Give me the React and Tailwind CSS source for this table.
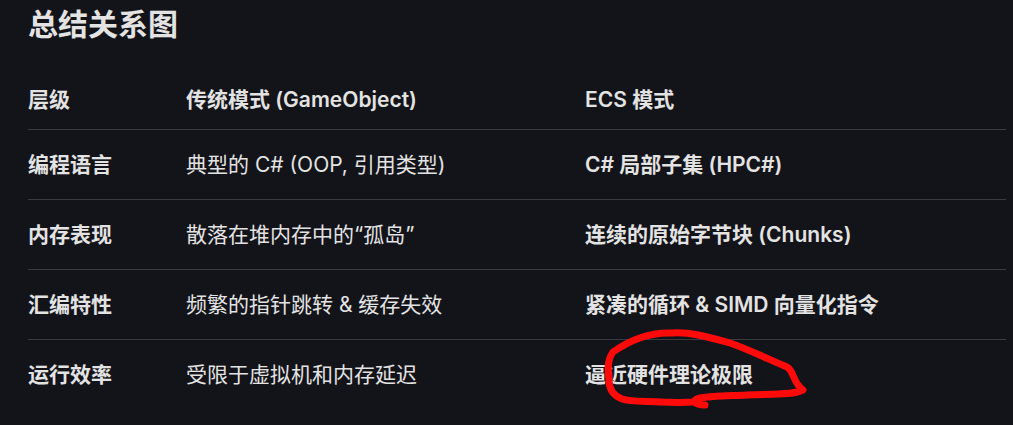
const rows = [
  ["编程语言", "典型的 C# (OOP, 引用类型)", "C# 局部子集 (HPC#)"],
  ["内存表现", "散落在堆内存中的“孤岛”", "连续的原始字节块 (Chunks)"],
  ["汇编特性", "频繁的指针跳转 & 缓存失效", "紧凑的循环 & SIMD 向量化指令"],
  ["运行效率", "受限于虚拟机和内存延迟", "逼近硬件理论极限"],
];

export default function App() {
  return (
    <div
      className="relative w-[1013px] h-[425px] overflow-hidden bg-[#131419] text-[#e3e3e3]"
      style={{ fontFamily: 'Inter, "Noto Sans CJK SC", sans-serif' }}
    >
      {/* TITLE */}
      <div className="h-[70px] pl-[28px] pt-[4px]">
        <h2 className="text-[30px] leading-[40px] font-bold">总结关系图</h2>
      </div>

      {/* TABLE */}
      <div className="ml-[28px] w-[978px]">
        <div className="grid grid-cols-[158px_399px_421px] h-[60px] items-center border-b border-[#3a3b40] text-[21px] font-semibold">
          <div>层级</div>
          <div>传统模式 (GameObject)</div>
          <div>ECS 模式</div>
        </div>

        {rows.map((r, i) => (
          <div
            key={i}
            className={`grid grid-cols-[158px_399px_421px] h-[70px] items-center text-[21px] ${
              i < rows.length - 1 ? "border-b border-[#3a3b40]" : ""
            }`}
          >
            <div className="font-semibold">{r[0]}</div>
            <div className="font-normal">{r[1]}</div>
            <div className="font-semibold">{r[2]}</div>
          </div>
        ))}
      </div>

      {/* red scribble */}
      <svg
        className="absolute left-0 top-0 pointer-events-none"
        width="1013"
        height="425"
        viewBox="0 0 1013 425"
      >
        <path
          d="M613 352 C630 340 650 332 672 333 C690 332 705 336 730 343 C750 350 770 360 787 367 C795 372 792 382 803 390 C795 395 770 394 747 395 C725 396 712 396 700 398 C690 400 695 405 705 405 M693 402 C680 403 670 402 663 402 C645 401 630 402 622 399 C612 395 609 388 609 380 C608 370 607 360 613 352"
          fill="none"
          stroke="#ff0a0a"
          strokeWidth="7"
          strokeLinecap="round"
          strokeLinejoin="round"
        />
      </svg>
    </div>
  );
}
